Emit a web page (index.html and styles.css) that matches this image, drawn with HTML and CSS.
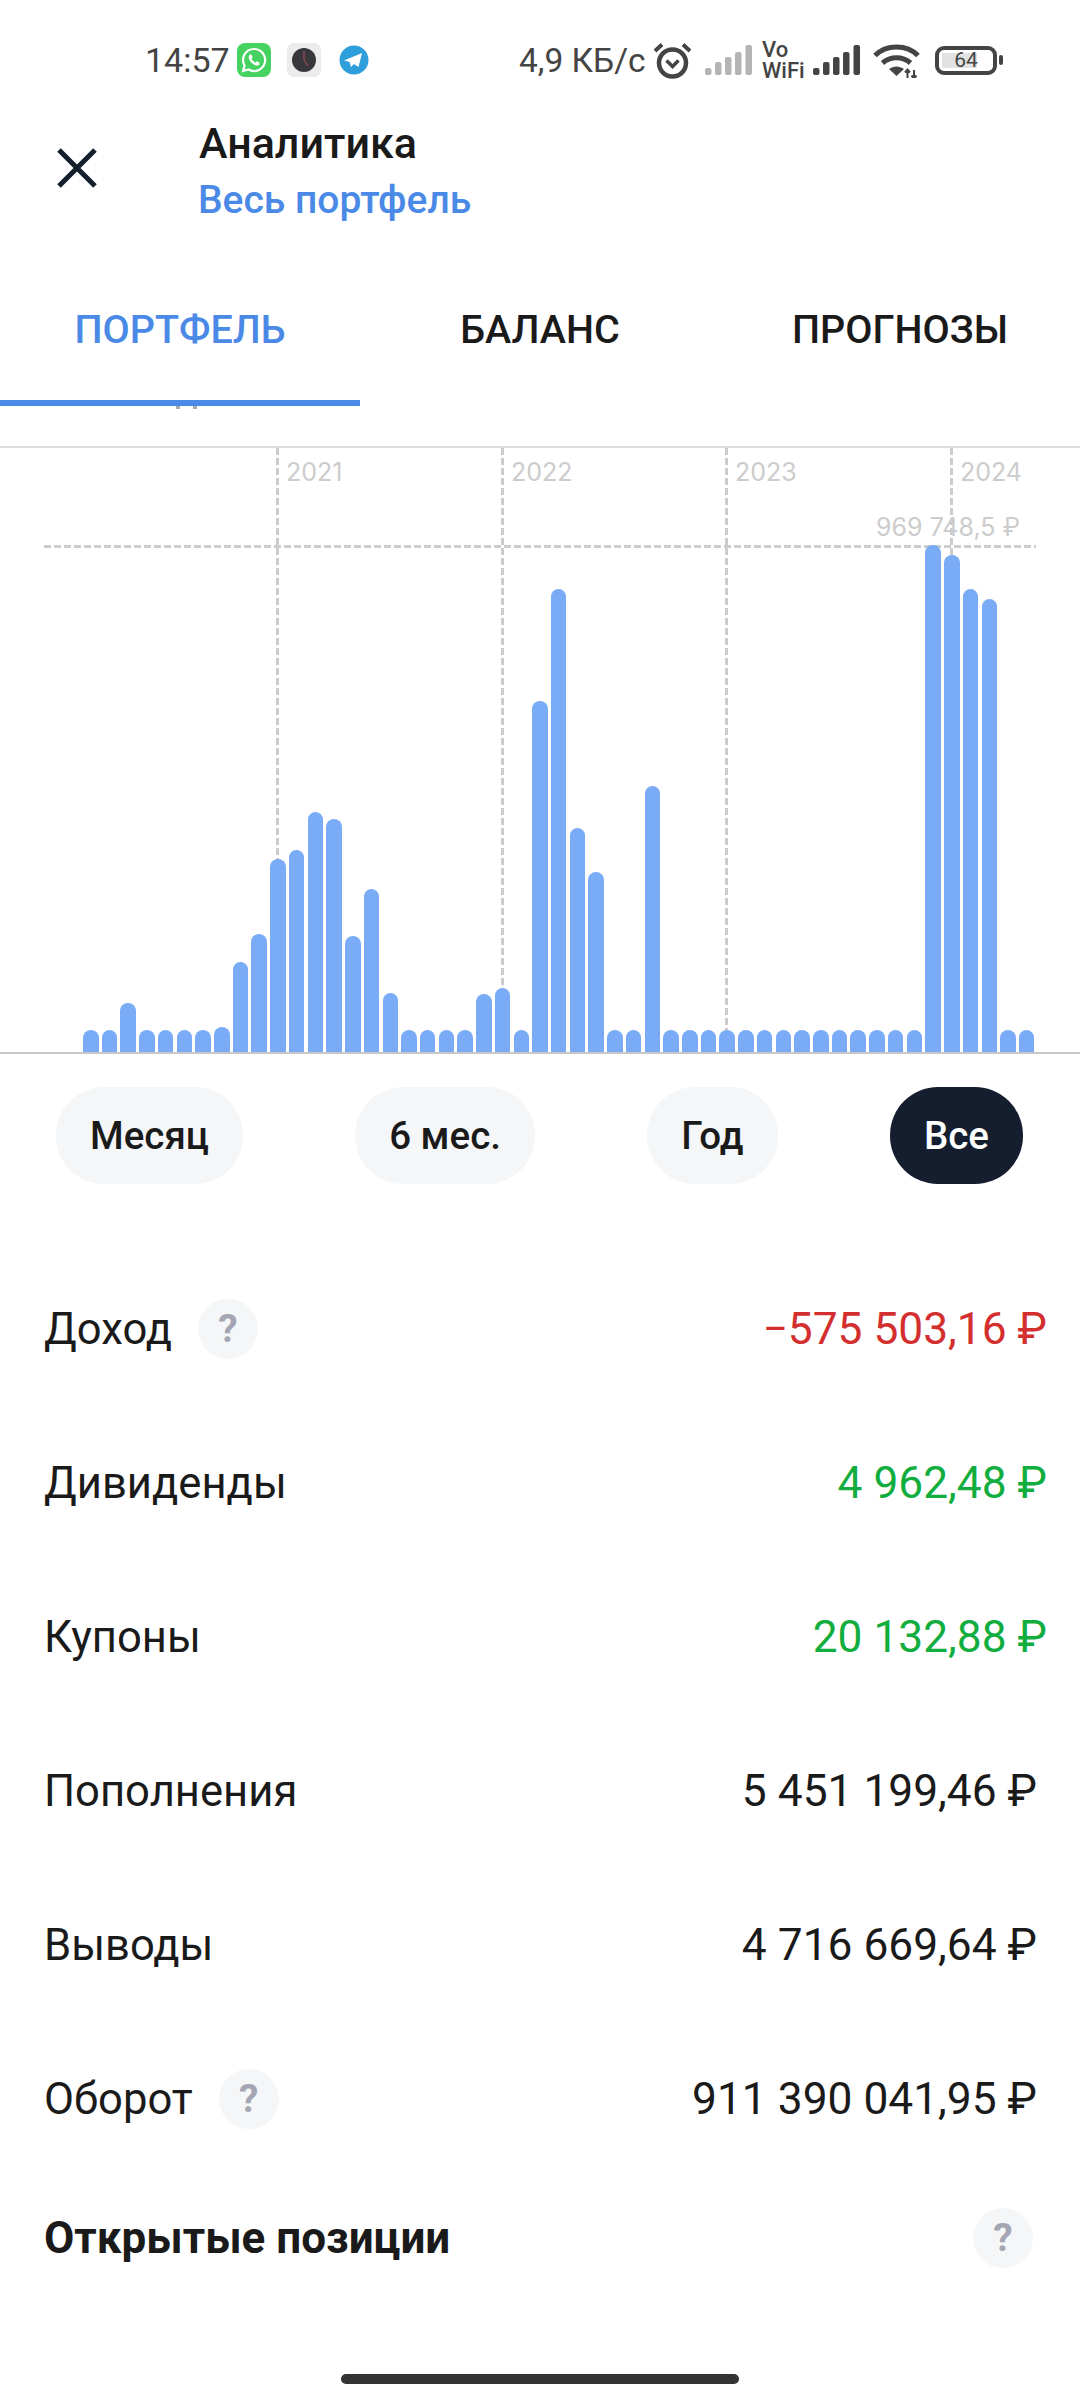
FILE: index.html
```html
<!DOCTYPE html>
<html lang="ru">
<head>
    <meta charset="UTF-8">
    <meta name="viewport" content="width=device-width, initial-scale=1.0">
    <title>Аналитика</title>
    <link rel="stylesheet" href="styles.css">
</head>
<body>
    <div class="status-bar">
        <span class="time">14:57</span>
        <svg class="app-icon" width="34" height="34" viewBox="0 0 34 34">
            <rect width="34" height="34" rx="8" fill="#45d260"/>
            <path d="M17 6a11 11 0 0 0-9.400 16.600L6 28l5.600-1.500A11 11 0 1 0 17 6z" fill="none" stroke="#fff" stroke-width="2.200"/>
            <path d="M13.200 11.400c-1.600.9-1.900 2.800-.9 5 1.200 2.600 3.400 4.800 6 5.800 2 .7 3.600.3 4.400-1.200l-.4-1.600-2.600-1.200-1.200 1.300c-1.700-.6-3.200-2.100-3.900-3.800l1.100-1.200-1-2.700z" fill="#fff"/>
        </svg>
        <svg class="app-icon clock-icon" width="34" height="34" viewBox="0 0 34 34">
            <rect width="34" height="34" rx="7" fill="#ececec"/>
            <circle cx="17" cy="17" r="12" fill="#38383c"/>
            <path d="M17 8v9l4 6" fill="none" stroke="#b05050" stroke-width="1"/>
        </svg>
        <svg class="app-icon tg-icon" width="30" height="30" viewBox="0 0 30 30">
            <circle cx="15" cy="15" r="14.500" fill="#2f9fdc"/>
            <path d="M23 8 5 15.500l5.500 1.500 1.500 5 3-3 4.500 3z" fill="#fff"/>
        </svg>
        <span class="speed">4,9 КБ/с</span>
        <svg class="alarm" width="41" height="40" viewBox="0 0 41 40">
            <circle cx="20.500" cy="23" r="13.500" fill="none" stroke="#444" stroke-width="4.500"/>
            <path d="M3 11 10 4.500M38 11 31 4.500" fill="none" stroke="#444" stroke-width="4"/>
            <path d="M14.500 20.500 20.500 26.500 26.500 20.500" fill="none" stroke="#444" stroke-width="3.500"/>
        </svg>
        <svg class="signal signal-off" width="47" height="30" viewBox="0 0 47 30">
            <rect x="0" y="23" width="6.500" height="7" rx="2"/>
            <rect x="10" y="17" width="6.500" height="13" rx="2"/>
            <rect x="20" y="12" width="6.500" height="18" rx="2"/>
            <rect x="30" y="7" width="6.500" height="23" rx="2"/>
            <rect x="40.500" y="0" width="6.500" height="30" rx="2"/>
        </svg>
        <span class="vowifi">Vo<br>WiFi</span>
        <svg class="signal signal-on" width="47" height="30" viewBox="0 0 47 30">
            <rect x="0" y="23" width="6.500" height="7" rx="2"/>
            <rect x="10" y="17" width="6.500" height="13" rx="2"/>
            <rect x="20" y="12" width="6.500" height="18" rx="2"/>
            <rect x="30" y="7" width="6.500" height="23" rx="2"/>
            <rect x="40.500" y="0" width="6.500" height="30" rx="2"/>
        </svg>
        <svg class="wifi" width="47" height="35" viewBox="0 0 47 35">
            <path d="M2 12.500C13 1 34 1 45 12.500M9.500 20c8-7 20-7 28 0" fill="none" stroke="#444" stroke-width="5"/>
            <path d="M16 26c4.500-3.500 10.500-3.500 15 0l-7.500 7z" fill="#444"/>
            <path d="M34.500 35v-8M32 29.500l2.500-3 2.500 3M41 27v8M38.500 32.500l2.500 3 2.500-3" fill="none" stroke="#444" stroke-width="2"/>
        </svg>
        <div class="battery">
            <div class="battery-fill"></div>
            <span class="battery-num">64</span>
        </div>
        <div class="battery-cap"></div>
    </div>

    <div class="header">
        <div class="close">
            <svg width="40" height="40" viewBox="0 0 40 40">
                <path d="M2 2 38 38M38 2 2 38" fill="none" stroke="#15202f" stroke-width="5"/>
            </svg>
        </div>
        <div>
            <div class="title">Аналитика</div>
            <div class="subtitle">Весь портфель</div>
        </div>
    </div>

    <div class="tabs">
        <div class="tab active">ПОРТФЕЛЬ</div>
        <div class="tab">БАЛАНС</div>
        <div class="tab">ПРОГНОЗЫ</div>
    </div>

    <div class="chart">
        <div class="vline v1"><span>2021</span></div>
        <div class="vline v2"><span>2022</span></div>
        <div class="vline v3"><span>2023</span></div>
        <div class="vline v4"><span>2024</span></div>
        <div class="hline"></div>
        <div class="max-label">969 748,5 ₽</div>
        <div class="bars">
            <div class="bar" style="height:22px"></div>
            <div class="bar" style="height:22px"></div>
            <div class="bar" style="height:49px"></div>
            <div class="bar" style="height:22px"></div>
            <div class="bar" style="height:22px"></div>
            <div class="bar" style="height:22px"></div>
            <div class="bar" style="height:22px"></div>
            <div class="bar" style="height:25px"></div>
            <div class="bar" style="height:90px"></div>
            <div class="bar" style="height:118px"></div>
            <div class="bar" style="height:193px"></div>
            <div class="bar" style="height:202px"></div>
            <div class="bar" style="height:240px"></div>
            <div class="bar" style="height:233px"></div>
            <div class="bar" style="height:116px"></div>
            <div class="bar" style="height:163px"></div>
            <div class="bar" style="height:59px"></div>
            <div class="bar" style="height:22px"></div>
            <div class="bar" style="height:22px"></div>
            <div class="bar" style="height:22px"></div>
            <div class="bar" style="height:22px"></div>
            <div class="bar" style="height:58px"></div>
            <div class="bar" style="height:64px"></div>
            <div class="bar" style="height:22px"></div>
            <div class="bar" style="height:351px"></div>
            <div class="bar" style="height:463px"></div>
            <div class="bar" style="height:224px"></div>
            <div class="bar" style="height:180px"></div>
            <div class="bar" style="height:22px"></div>
            <div class="bar" style="height:22px"></div>
            <div class="bar" style="height:266px"></div>
            <div class="bar" style="height:22px"></div>
            <div class="bar" style="height:22px"></div>
            <div class="bar" style="height:22px"></div>
            <div class="bar" style="height:22px"></div>
            <div class="bar" style="height:22px"></div>
            <div class="bar" style="height:22px"></div>
            <div class="bar" style="height:22px"></div>
            <div class="bar" style="height:22px"></div>
            <div class="bar" style="height:22px"></div>
            <div class="bar" style="height:22px"></div>
            <div class="bar" style="height:22px"></div>
            <div class="bar" style="height:22px"></div>
            <div class="bar" style="height:22px"></div>
            <div class="bar" style="height:22px"></div>
            <div class="bar" style="height:507px"></div>
            <div class="bar" style="height:497px"></div>
            <div class="bar" style="height:463px"></div>
            <div class="bar" style="height:453px"></div>
            <div class="bar" style="height:22px"></div>
            <div class="bar" style="height:22px"></div>
        </div>
    </div>

    <div class="periods">
        <div class="pill">Месяц</div>
        <div class="pill">6 мес.</div>
        <div class="pill">Год</div>
        <div class="pill selected">Все</div>
    </div>

    <div class="rows">
        <div class="row">
            <div class="row-label">Доход <span class="help">?</span></div>
            <div class="amount loss">−575 503,16 ₽</div>
        </div>
        <div class="row">
            <div class="row-label">Дивиденды</div>
            <div class="amount gain">4 962,48 ₽</div>
        </div>
        <div class="row">
            <div class="row-label">Купоны</div>
            <div class="amount gain">20 132,88 ₽</div>
        </div>
        <div class="row">
            <div class="row-label">Пополнения</div>
            <div class="amount">5 451 199,46 ₽</div>
        </div>
        <div class="row">
            <div class="row-label">Выводы</div>
            <div class="amount">4 716 669,64 ₽</div>
        </div>
        <div class="row">
            <div class="row-label">Оборот <span class="help">?</span></div>
            <div class="amount">911 390 041,95 ₽</div>
        </div>
        <div class="row section">
            <div class="row-label">Открытые позиции</div>
            <span class="help">?</span>
        </div>
    </div>

    <div class="home-bar"></div>
</body>
</html>
```

FILE: styles.css
```css
body {
    font-family: Roboto, "Noto Sans", sans-serif;
    background-color: #fff;
    color: #1a1a1a;
    margin: 0;
    width: 1080px;
    height: 2400px;
    overflow: hidden;
}

/* status bar */
.status-bar {
    height: 116px;
    padding: 4px 0 0 145px;
    box-sizing: border-box;
    display: flex;
    align-items: center;
    color: #444;
}

.time {
    font-size: 34px;
    width: 92px;
}

.app-icon {
    margin-right: 16px;
}

.tg-icon {
    margin-left: 2px;
}

.speed {
    font-size: 33.5px;
    margin-left: 134px;
    width: 133px;
}

.alarm {
    margin-right: 12px;
}

.signal-off rect {
    fill: #b4b4b4;
}

.signal-on rect {
    fill: #444;
}

.vowifi {
    font-size: 22px;
    font-weight: 500;
    line-height: 21px;
    width: 42px;
    margin: 0 9px 0 10px;
}

.wifi {
    margin-left: 13px;
    margin-right: 15px;
}

.battery {
    position: relative;
    width: 62px;
    height: 29px;
    border: 4px solid #444;
    border-radius: 9px;
    box-sizing: border-box;
    text-align: center;
    overflow: hidden;
}

.battery-fill {
    position: absolute;
    left: 3px;
    top: 3px;
    bottom: 3px;
    width: 64%;
    background-color: #e2e2e2;
}

.battery-num {
    position: relative;
    font-size: 21px;
    line-height: 21px;
    display: block;
}

.battery-cap {
    width: 4px;
    height: 10px;
    margin-left: 2px;
    background-color: #444;
    border-radius: 2px;
}

/* header */
.header {
    display: flex;
    height: 112px;
}

.close {
    width: 198px;
    padding: 32px 0 0 57px;
    box-sizing: border-box;
}

.title {
    font-size: 43px;
    font-weight: 500;
    line-height: 56px;
    margin: -1px 0 1px 1px;
}

.subtitle {
    font-size: 39px;
    font-weight: 500;
    line-height: 56px;
    color: #4a8ae6;
}

/* tabs */
.tabs {
    display: flex;
    height: 178px;
}

.tab {
    position: relative;
    width: 360px;
    padding-top: 77px;
    height: 178px;
    box-sizing: border-box;
    font-size: 39.5px;
    font-weight: 500;
    line-height: 50px;
    text-align: center;
}

.tab.active {
    color: #4a8ae6;
    border-bottom: 6px solid #4a8ae6;
}

/* clipped text of the scrolled content, peeks out under the indicator */
.tab.active::after {
    content: "";
    position: absolute;
    left: 176px;
    bottom: -9px;
    width: 4px;
    height: 3px;
    background-color: #aaa;
    box-shadow: 17px 0 0 #aaa;
}

/* chart */
.chart {
    position: relative;
    margin-top: 40px;
    height: 608px;
    box-sizing: border-box;
    border-top: 2px solid #ddd;
    border-bottom: 2px solid #c8c8c8;
}

.vline {
    position: absolute;
    top: 0;
    bottom: 0;
    width: 3px;
    background-image: repeating-linear-gradient(to bottom, #ccc 0, #ccc 7px, transparent 7px, transparent 10px);
}

.vline span {
    position: absolute;
    left: 10px;
    top: 9px;
    font-family: Inter, sans-serif;
    font-size: 25px;
    line-height: 30px;
    color: #ccc;
}

.v1 {
    left: 276px;
}

.v2 {
    left: 501px;
}

.v3 {
    left: 725px;
}

.v4 {
    left: 950px;
}

.hline {
    position: absolute;
    left: 44px;
    width: 992px;
    top: 97px;
    height: 3px;
    background-image: repeating-linear-gradient(to right, #ccc 0, #ccc 7px, transparent 7px, transparent 10px);
}

.max-label {
    position: absolute;
    right: 60px;
    top: 64px;
    font-family: Inter, sans-serif;
    font-size: 25px;
    line-height: 30px;
    color: #ccc;
}

.bars {
    position: absolute;
    left: 83px;
    bottom: 0;
    display: flex;
    align-items: flex-end;
    gap: 3.23px;
}

.bar {
    width: 15.5px;
    background-color: #7aabf7;
    border-radius: 8px 8px 0 0;
}

/* period switch */
.periods {
    display: flex;
    justify-content: space-between;
    margin-top: 33px;
    padding: 0 57px 0 56px;
}

.pill {
    height: 97px;
    padding: 0 34px;
    border-radius: 48px;
    background-color: #f4f6f8;
    font-size: 38.5px;
    font-weight: 500;
    line-height: 97px;
}

.pill.selected {
    background-color: #141e2e;
    color: #fff;
}

/* rows */
.rows {
    margin-top: 68px;
    padding: 0 33px 0 44px;
}

.row {
    display: flex;
    justify-content: space-between;
    align-items: center;
    height: 154px;
    font-size: 44.3px;
}

.row-label {
    display: flex;
    align-items: center;
    font-size: 43.6px;
}

.help {
    display: inline-block;
    width: 60px;
    height: 60px;
    margin-left: 26px;
    border-radius: 50%;
    background-color: #f5f6f7;
    color: #a4a7b3;
    font-size: 39px;
    font-weight: 700;
    line-height: 60px;
    text-align: center;
}

.amount {
    margin-right: 10px;
}

.amount.loss {
    color: #d32f2f;
    margin-right: 0;
}

.amount.gain {
    color: #12ad3f;
    margin-right: 0;
}

.row.section {
    height: 124px;
}

.row.section .row-label {
    font-size: 44px;
    font-weight: 700;
}

.row.section .help {
    margin-right: 14px;
}

.home-bar {
    width: 398px;
    height: 10px;
    margin: 74px auto 0;
    border-radius: 5px;
    background-color: #333;
}
```
